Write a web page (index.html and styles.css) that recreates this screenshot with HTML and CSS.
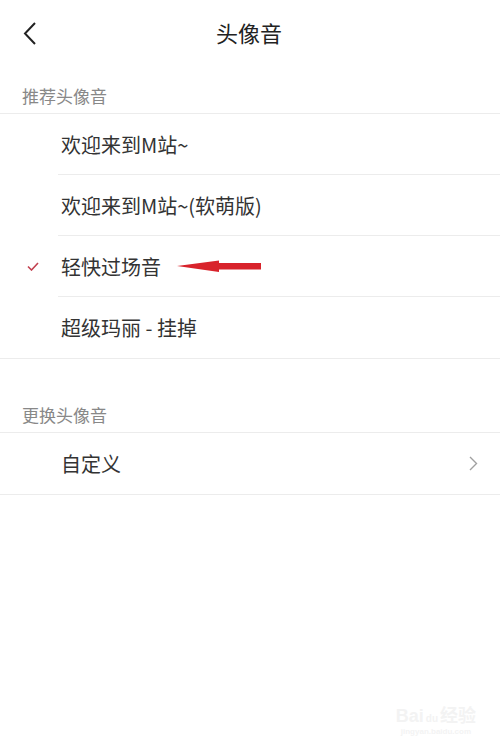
FILE: index.html
```html
<!DOCTYPE html>
<html lang="zh-CN">
<head>
  <meta charset="UTF-8">
  <title>头像音</title>
  <link rel="stylesheet" href="styles.css">
</head>
<body>

<div class="topbar">
  <svg class="back" width="14" height="24" viewBox="0 0 14 24">
    <path d="M12 1 L2 11.5 L12 22" fill="none" stroke="#222" stroke-width="2"/>
  </svg>
  <div class="title">头像音</div>
</div>

<div class="section-head first">推荐头像音</div>
<div class="group">
  <div class="item">
    <div class="mark"></div>
    <div class="body">欢迎来到M站~</div>
  </div>
  <div class="item">
    <div class="mark"></div>
    <div class="body">欢迎来到M站~(软萌版)</div>
  </div>
  <div class="item">
    <div class="mark">
      <svg width="12" height="9" viewBox="0 0 12 9">
        <path d="M1 4.5 L4.5 8 L11 1" fill="none" stroke="#c2404f" stroke-width="1.6"/>
      </svg>
    </div>
    <div class="body">轻快过场音
      <svg class="arrow" width="84" height="14" viewBox="0 0 84 14">
        <polygon points="0,7 42,1.5 42,4 84,4 84,10.5 42,10.5 42,13" fill="#d8232b"/>
      </svg>
    </div>
  </div>
  <div class="item">
    <div class="mark"></div>
    <div class="body">超级玛丽 - 挂掉</div>
  </div>
</div>

<div class="section-head">更换头像音</div>
<div class="group">
  <div class="item">
    <div class="mark"></div>
    <div class="body">自定义
      <svg class="chev" width="9" height="15" viewBox="0 0 9 15">
        <path d="M1 1 L7.5 7.5 L1 14" fill="none" stroke="#a0a0a0" stroke-width="1.4"/>
      </svg>
    </div>
  </div>
</div>

<div class="watermark">
  <div class="wm-logo">Bai<span class="paw">du</span>经验</div>
  <div class="wm-url">jingyan.baidu.com</div>
</div>

</body>
</html>
```

FILE: styles.css
```css
body {
  margin: 0;
  background: #fff;
  color: #333;
  font-family: "Noto Sans CJK SC", "Noto Sans", sans-serif;
  width: 500px;
  height: 744px;
  overflow: hidden;
  position: relative;
}

.topbar {
  height: 70px;
  display: flex;
  align-items: center;
  justify-content: center;
  position: relative;
}

.back {
  position: absolute;
  left: 23px;
  top: 22px;
}

.title {
  font-size: 22px;
  color: #222;
  margin: -7px 0 0 -2px;
}

.section-head {
  height: 43px;
  box-sizing: border-box;
  display: flex;
  align-items: center;
  padding: 8px 0 0 22px;
  font-size: 17px;
  color: #888;
  margin-top: 30px;
}

.section-head.first {
  margin-top: 0;
}

.group {
  border-top: 1px solid #ececec;
  border-bottom: 1px solid #ececec;
}

.item {
  display: flex;
  height: 61px;
}

.mark {
  width: 58px;
  flex-shrink: 0;
  display: flex;
  align-items: center;
  justify-content: flex-end;
  padding-right: 19px;
  box-sizing: border-box;
}

.body {
  flex: 1;
  display: flex;
  align-items: center;
  padding-left: 3px;
  font-size: 20px;
  color: #333;
  border-bottom: 1px solid #ececec;
}

.item:last-child .body {
  border-bottom: none;
}

.arrow {
  margin-left: 16px;
}

.chev {
  margin-left: auto;
  margin-right: 22px;
}

.watermark {
  position: absolute;
  right: 24px;
  bottom: 8px;
  color: #f3f3f3;
  text-align: center;
  font-family: "Liberation Sans", "Noto Sans CJK SC", sans-serif;
}

.wm-logo {
  font-size: 18px;
  font-weight: bold;
}

.paw {
  font-size: 10px;
  margin: 0 2px;
}

.wm-url {
  font-size: 8px;
  font-weight: bold;
}
```
